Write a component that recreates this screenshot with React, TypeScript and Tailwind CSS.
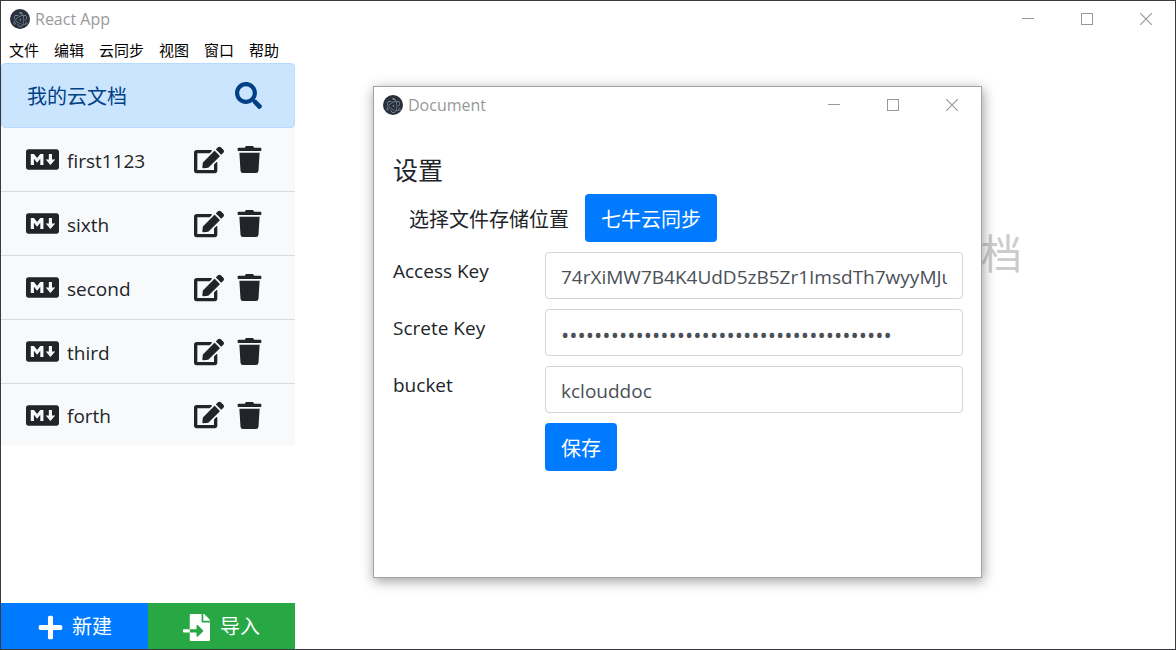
import { useState } from 'react';
import { FaEdit, FaFileImport, FaMarkdown, FaPlus, FaSearch, FaTrash } from 'react-icons/fa';
import { SiElectron } from 'react-icons/si';

const menus = ['文件', '编辑', '云同步', '视图', '窗口', '帮助'];
const files = ['first1123', 'sixth', 'second', 'third', 'forth'];

function TitleBar({ title }: { title: string }) {
  return (
    <header className="flex h-9 shrink-0 items-center justify-between pl-[9px]">
      <div className="flex items-center gap-[5px]">
        <span className="flex size-5 items-center justify-center rounded-full bg-[#2b2e3b] text-[#a9d0dc]">
          <SiElectron size={15} aria-hidden />
        </span>
        <span className="text-[16px] leading-5 text-[#999]">{title}</span>
      </div>
      <div className="flex h-full text-[#999]">
        <button type="button" aria-label="最小化" className="flex w-[59px] items-center justify-center">
          <svg width="12" height="12" viewBox="0 0 12 12" shapeRendering="crispEdges">
            <path d="M0 5h12v1H0z" fill="currentColor" />
          </svg>
        </button>
        <button type="button" aria-label="最大化" className="flex w-[59px] items-center justify-center">
          <svg width="12" height="12" viewBox="0 0 12 12" fill="none" stroke="currentColor" shapeRendering="crispEdges">
            <path d="M.5 .5h11v11H.5z" />
          </svg>
        </button>
        <button type="button" aria-label="关闭" className="flex w-[59px] items-center justify-center">
          <svg width="12" height="12" viewBox="0 0 12 12" fill="none" stroke="currentColor" strokeWidth="1.2">
            <path d="M0 0l12 12M12 0L0 12" />
          </svg>
        </button>
      </div>
    </header>
  );
}

function Field({ id, label, secret = false, initial }: { id: string; label: string; secret?: boolean; initial: string }) {
  const [value, setValue] = useState(initial);
  return (
    <div className="grid grid-cols-[152px_1fr]">
      <label htmlFor={id} className="pt-1 text-[19px] leading-[30px]">
        {label}
      </label>
      <input
        id={id}
        type={secret ? 'password' : 'text'}
        value={value}
        onChange={(e) => setValue(e.target.value)}
        className={`h-[47px] w-full min-w-0 rounded border border-[#ced4da] bg-white px-[15px] pt-[2px] text-[#495057] outline-none ${
          secret ? 'text-[22px]' : 'text-[19px]'
        }`}
      />
    </div>
  );
}

function SettingsWindow() {
  return (
    <section
      aria-label="Document"
      className="absolute top-[85px] left-[372px] flex h-[492px] w-[609px] flex-col border border-[#a3a3a3] bg-white shadow-[1px_3px_12px_rgba(0,0,0,0.4)]"
    >
      <TitleBar title="Document" />
      <div className="flex flex-col pt-8 pr-[18px] pl-[19px]">
        <h1 className="text-[25px] leading-[30px] font-normal">设置</h1>
        <form className="flex flex-col gap-[10px] pt-[9px]" onSubmit={(e) => e.preventDefault()}>
          <div className="flex items-center gap-4 pl-4 text-[20px]">
            <span className="pt-[3px]">选择文件存储位置</span>
            <button type="button" className="h-12 rounded bg-[#007bff] px-4 pt-[3px] text-white">
              七牛云同步
            </button>
          </div>
          <Field id="access-key" label="Access Key" initial="74rXiMW7B4K4UdD5zB5Zr1ImsdTh7wyyMJu" />
          <Field id="secret-key" label="Screte Key" secret initial={'x'.repeat(40)} />
          <Field id="bucket" label="bucket" initial="kclouddoc" />
          <div className="pl-[152px]">
            <button type="submit" className="h-12 rounded bg-[#007bff] px-4 pt-[3px] text-[20px] text-white">
              保存
            </button>
          </div>
        </form>
      </div>
    </section>
  );
}

export default function App() {
  return (
    <div className="relative flex min-h-screen flex-col overflow-hidden border border-[#3a3a3c] bg-white font-['Open_Sans','Noto_Sans_CJK_SC',sans-serif] text-[#212529]">
      <TitleBar title="React App" />
      <nav className="flex h-[26px] items-center gap-[15px] pl-2 text-[15px] leading-5 text-black">
        {menus.map((menu) => (
          <button key={menu} type="button">
            {menu}
          </button>
        ))}
      </nav>
      <div className="flex flex-1">
        <aside className="flex w-[294px] shrink-0 flex-col justify-between">
          <div>
            <div className="flex h-[65px] items-center justify-between rounded border border-[#b8daff] bg-[#cce5ff] pr-8 pl-[25px] text-[#004085]">
              <span className="pt-[3px] text-[20px]">我的云文档</span>
              <button type="button" aria-label="搜索">
                <FaSearch size={27} />
              </button>
            </div>
            <ul>
              {files.map((file) => (
                <li
                  key={file}
                  className="flex h-16 items-center border-b border-[#d8dadd] bg-[#f8f9fa] pr-8 pl-[25px] last:h-[62px] last:border-b-0"
                >
                  <FaMarkdown size={33} className="shrink-0" aria-hidden />
                  <a href="#" className="flex-1 pt-[2px] pl-2 text-[19px] leading-7">
                    {file}
                  </a>
                  <span className="flex items-center gap-3">
                    <button type="button" aria-label={`编辑 ${file}`}>
                      <FaEdit size={30} />
                    </button>
                    <button type="button" aria-label={`删除 ${file}`}>
                      <FaTrash size={27} />
                    </button>
                  </span>
                </li>
              ))}
            </ul>
          </div>
          <div className="grid h-[46px] grid-cols-2 text-[20px] text-white">
            <button type="button" className="flex items-center justify-center gap-2 bg-[#007bff] pt-[2px]">
              <FaPlus size={27} aria-hidden />
              新建
            </button>
            <button type="button" className="flex items-center justify-center gap-[10px] bg-[#28a745] pt-[2px]">
              <FaFileImport size={27} aria-hidden />
              导入
            </button>
          </div>
        </aside>
        <main className="flex flex-1 justify-end pt-40 pr-[153px]">
          <p className="text-[41px] leading-[60px] text-[#ccc]">文档</p>
        </main>
      </div>
      <SettingsWindow />
    </div>
  );
}
